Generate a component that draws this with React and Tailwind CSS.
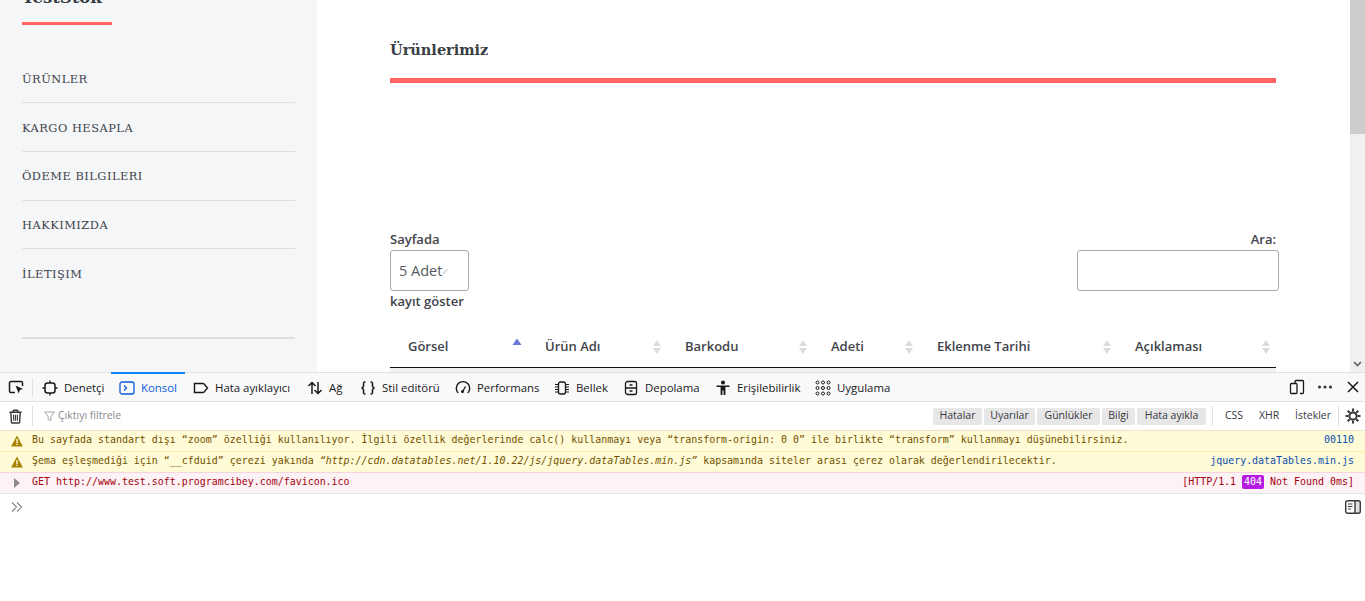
const slab = 'font-["DejaVu_Serif",serif]'

const navItems = ['ÜRÜNLER', 'KARGO HESAPLA', 'ÖDEME BILGILERI', 'HAKKIMIZDA', 'İLETIŞIM']

const columns = [
  { label: 'Görsel', width: 'w-[137px]', active: true },
  { label: 'Ürün Adı', width: 'w-[140px]' },
  { label: 'Barkodu', width: 'w-[146px]' },
  { label: 'Adeti', width: 'w-[106px]' },
  { label: 'Eklenme Tarihi', width: 'w-[198px]' },
  { label: 'Açıklaması', width: 'w-[159px]' },
]

const Ico = ({ children, className = 'h-4 w-4' }) => (
  <svg viewBox="0 0 16 16" fill="none" stroke="currentColor" strokeWidth="1.3" className={`${className} shrink-0`}>
    {children}
  </svg>
)

const tabs = [
  {
    label: 'Denetçi', width: 'w-[78px]', pad: 'pl-[9px]', icon: (
      <Ico><rect x="3" y="3" width="10" height="10" rx="2.5" strokeWidth="1.5" /><path d="M8 0.5V3M8 13v2.5M0.5 8H3M13 8h2.5" /></Ico>
    ),
  },
  {
    label: 'Konsol', width: 'w-[74px]', active: true, icon: (
      <Ico><rect x="1" y="2" width="14" height="12" rx="2" /><path d="M5 5.5 7.5 8 5 10.5" /></Ico>
    ),
  },
  {
    label: 'Hata ayıklayıcı', width: 'w-[114px]', icon: (
      <Ico><path d="M1.5 3.5h8.5a1.5 1.5 0 0 1 1.1.5l3.4 4-3.4 4a1.5 1.5 0 0 1-1.1.5H1.5z" strokeWidth="1.4" /></Ico>
    ),
  },
  {
    label: 'Ağ', width: 'w-[53px]', icon: (
      <Ico><path d="M5 14V2.5M1.5 6 5 2.5 8.5 6M11 2v11.5M7.5 10l3.5 3.5 3.5-3.5" strokeWidth="1.5" /></Ico>
    ),
  },
  {
    label: 'Stil editörü', width: 'w-[95px]', icon: (
      <Ico><path d="M5.5 2H5a1.5 1.5 0 0 0-1.5 1.5v3L2 8l1.5 1.5v3A1.5 1.5 0 0 0 5 14h.5M10.5 2h.5a1.5 1.5 0 0 1 1.5 1.5v3L14 8l-1.5 1.5v3A1.5 1.5 0 0 1 11 14h-.5" strokeWidth="1.5" /></Ico>
    ),
  },
  {
    label: 'Performans', width: 'w-[99px]', icon: (
      <Ico><path d="M3.2 13A6.7 6.7 0 1 1 12.8 13" strokeWidth="1.4" /><circle cx="7.5" cy="11.5" r="1.5" fill="currentColor" stroke="none" /><path d="M8 11 10.5 6.5" /></Ico>
    ),
  },
  {
    label: 'Bellek', width: 'w-[69px]', icon: (
      <Ico><rect x="4.5" y="2" width="7" height="12" rx="2" /><path d="M1 4.5h3M1 7h3M1 9.5h3M1 12h3M12 4.5h3M12 7h3M12 9.5h3M12 12h3" strokeWidth="1" /></Ico>
    ),
  },
  {
    label: 'Depolama', width: 'w-[92px]', icon: (
      <Ico><rect x="2.5" y="1.5" width="11" height="13" rx="2" /><path d="M2.5 8h11M6.5 5h3M6.5 11h3" /></Ico>
    ),
  },
  {
    label: 'Erişilebilirlik', width: 'w-[100px]', icon: (
      <svg viewBox="0 0 16 16" fill="currentColor" className="h-4 w-4 shrink-0">
        <circle cx="8" cy="2.5" r="2" />
        <path d="M1.5 5.5h13v1.6H10.4V15H8.6v-4.5H7.4V15H5.6V7.1H1.5z" />
      </svg>
    ),
  },
  {
    label: 'Uygulama', width: 'w-[92px]', icon: (
      <Ico>
        {[2.5, 8, 13.5].flatMap((x) =>
          [2.5, 8, 13.5].map((y) => <circle key={`${x}-${y}`} cx={x} cy={y} r="1.5" strokeWidth="1" />)
        )}
      </Ico>
    ),
  },
]

const filters = [
  { label: 'Hatalar', width: 'w-[49px]' },
  { label: 'Uyarılar', width: 'w-[51px]' },
  { label: 'Günlükler', width: 'w-[63px]' },
  { label: 'Bilgi', width: 'w-[33px]' },
  { label: 'Hata ayıkla', width: 'w-[69px]' },
]

const Warn = () => (
  <svg viewBox="0 0 12 12" className="h-3 w-3 shrink-0">
    <path d="M6 .5 11.9 11.5H.1z" fill="#a58200" />
    <path d="M5.3 4h1.4v4H5.3zM5.3 8.8h1.4v1.3H5.3z" fill="#fffbd6" />
  </svg>
)

function SortArrows({ active }) {
  if (active) {
    return (
      <svg viewBox="0 0 10 16" className="mb-[7px] h-4 w-[10px] shrink-0">
        <path d="M5 3.5 9.5 10H.5z" fill="#7077dc" />
      </svg>
    )
  }
  return (
    <svg viewBox="0 0 10 16" className="h-4 w-[10px] shrink-0">
      <path d="M5 1 9 7H1z" fill="#dcdcdc" />
      <path d="M5 15 9 9H1z" fill="#dcdcdc" />
    </svg>
  )
}

function Sidebar() {
  return (
    <aside className="flex w-[317px] shrink-0 flex-col overflow-hidden bg-[#f5f6f8] pl-[22px] pr-[22px]">
      <h1 className={`${slab} -mt-[14px] text-[16.5px] font-bold leading-[24px] text-[#343a40]`}>TestStok</h1>
      <div className="mt-[12px] h-[3px] w-[90px] shrink-0 bg-[#ff6464]" />
      <nav className="mt-[29.5px]">
        {navItems.map((item, i) => (
          <div
            key={item}
            className={`${slab} flex h-[48.7px] items-start pt-[15.5px] text-[11.4px] leading-[18px] tracking-[0.5px] text-[#3d4249] ${i < 4 ? 'border-b border-[#dfe0e2]' : ''}`}
          >
            {item}
          </div>
        ))}
      </nav>
      <div className="mt-[39px] h-[2px] shrink-0 bg-[#dddee0]" />
    </aside>
  )
}

function Main() {
  return (
    <main className="min-w-0 flex-1 overflow-hidden pl-[73px] pr-[74px] font-['Open_Sans',sans-serif] text-[#3f444a]">
      <h2 className={`${slab} mt-[39px] text-[14.5px] font-bold leading-[22px] text-[#3a3f45]`}>Ürünlerimiz</h2>
      <div className="mt-[17px] h-[5px] bg-[#ff6464]" />

      <div className="mt-[147px] flex items-start justify-between">
        <div className="text-[13px] font-semibold leading-[18px]">
          <div>Sayfada</div>
          <div className="mt-[2px] flex h-[41px] w-[79px] items-center rounded-[3px] border border-[#a9a9a9] pl-[8px] text-[14.5px] font-normal text-[#555a60]">
            5 Adet
            <svg viewBox="0 0 8 8" className="-ml-[1px] h-2 w-2">
              <path d="M1 6.5 6.5 1.5 7.5 2.5 3 7z" fill="#d6d6d6" />
            </svg>
          </div>
          <div className="mt-[1px]">kayıt göster</div>
        </div>
        <div className="-mr-[3px] text-right text-[13px] font-semibold leading-[18px]">
          <div className="pr-[3px]">Ara:</div>
          <div className="mt-[2px] h-[41px] w-[202px] rounded-[3px] border border-[#a9a9a9]" />
        </div>
      </div>

      <div className="mt-[18px] flex h-[40px] border-b border-[#111] pb-[2px] text-[13px] font-semibold">
        {columns.map((col) => (
          <div key={col.label} className={`${col.width} flex items-center justify-between pl-[18px] pr-[5px]`}>
            <span>{col.label}</span>
            <SortArrows active={col.active} />
          </div>
        ))}
      </div>
      <div className="h-[4px] bg-[#f0f0f0]" />
    </main>
  )
}

function Scrollbar() {
  return (
    <div className="flex w-[15px] shrink-0 flex-col justify-between bg-[#f0f0f0]">
      <div className="h-[134px] bg-[#cdcdcd]" />
      <svg viewBox="0 0 15 15" className="mb-[1px] h-[15px] w-[15px] text-[#606060]">
        <path d="M4 6 7.5 9.5 11 6" fill="none" stroke="currentColor" strokeWidth="1.6" />
      </svg>
    </div>
  )
}

function Toolbar() {
  return (
    <div className="flex h-[30px] shrink-0 items-stretch border-y border-[#e0e0e2] bg-[#f9f9fa] text-[12px] text-[#18181a]">
      <div className="flex w-[32px] items-center pl-[8px]">
        <Ico>
          <path d="M7 13.5H3A1.5 1.5 0 0 1 1.5 12V4A1.5 1.5 0 0 1 3 2.5h10A1.5 1.5 0 0 1 14.5 4v3" strokeWidth="1.5" />
          <path d="M7.5 6.5 15 10l-3.2 1-1 3.5z" fill="currentColor" stroke="none" />
        </Ico>
      </div>
      <div className="my-[5px] w-px bg-[#e0e0e2]" />
      {tabs.map((tab) => (
        <div
          key={tab.label}
          className={`${tab.width} ${tab.pad || 'pl-[8px]'} -mt-px flex items-center gap-[6px] whitespace-nowrap border-t-2 ${tab.active ? 'border-[#0a84ff] text-[#0a5bd8]' : 'border-transparent'}`}
        >
          {tab.icon}
          <span className="font-['Open_Sans',sans-serif] text-[11.4px]">{tab.label}</span>
        </div>
      ))}
      <div className="ml-auto flex items-center gap-[12px] pr-[4px]">
        <Ico>
          <path d="M6 4.5V2.5A1 1 0 0 1 7 1.5h6.5a1 1 0 0 1 1 1v11a1 1 0 0 1-1 1H11" />
          <rect x="1.5" y="4.5" width="6.5" height="10" rx="1" />
        </Ico>
        <svg viewBox="0 0 16 16" fill="currentColor" className="h-4 w-4 text-[#38383d]">
          <circle cx="2.5" cy="8" r="1.6" />
          <circle cx="8" cy="8" r="1.6" />
          <circle cx="13.5" cy="8" r="1.6" />
        </svg>
        <Ico><path d="M3 3 13 13M13 3 3 13" strokeWidth="1.5" /></Ico>
      </div>
    </div>
  )
}

function FilterBar() {
  return (
    <div className="flex h-[29px] shrink-0 items-center border-b border-[#e8e4cf] bg-white font-['Open_Sans',sans-serif] text-[11px] text-[#38383d]">
      <div className="flex w-[32px] justify-center pr-[2px]">
        <Ico className="h-[15px] w-[15px]">
          <path d="M1.5 3.5h13M5.5 3.5V2a.7.7 0 0 1 .7-.7h3.6a.7.7 0 0 1 .7.7v1.5M3 3.5l.6 10.3a1.2 1.2 0 0 0 1.2 1.2h6.4a1.2 1.2 0 0 0 1.2-1.2L13 3.5" strokeWidth="1.5" />
          <path d="M6 6v6.5M8 6v6.5M10 6v6.5" strokeWidth="1.2" />
        </Ico>
      </div>
      <div className="h-[20px] w-px bg-[#e0e0e2]" />
      <Ico className="ml-[11px] h-[11px] w-[11px] text-[#9a9a9f]">
        <path d="M1 1.5h14L10 8v6l-4-2V8z" />
      </Ico>
      <span className="ml-[3px] text-[10.5px] text-[#8a8a8f]">Çıktıyı filtrele</span>
      <div className="ml-auto flex items-center">
        <div className="ml-[2px] flex items-center gap-[2px]">
          {filters.map((f) => (
            <span key={f.label} className={`${f.width} flex h-[17px] items-center justify-center rounded-[2px] bg-[#e7e7e8] whitespace-nowrap text-[10.5px]`}>
              {f.label}
            </span>
          ))}
        </div>
        <div className="ml-[6px] h-[20px] w-px bg-[#e0e0e2]" />
        <div className="flex w-[125px] items-center justify-between pl-[12px] pr-[7px] text-[10.5px]">
          <span>CSS</span>
          <span>XHR</span>
          <span>İstekler</span>
        </div>
        <div className="h-[20px] w-px bg-[#e0e0e2]" />
        <svg viewBox="0 0 16 16" className="ml-[6px] mr-[4px] h-4 w-4 text-[#38383d]">
          <circle cx="8" cy="8" r="3.6" fill="none" stroke="currentColor" strokeWidth="2" />
          <path d="M8 .5v3M8 12.5v3M.5 8h3M12.5 8h3M2.7 2.7l2.1 2.1M11.2 11.2l2.1 2.1M13.3 2.7l-2.1 2.1M4.8 11.2l-2.1 2.1" stroke="currentColor" strokeWidth="2" />
        </svg>
      </div>
    </div>
  )
}

function Console() {
  return (
    <div className="font-['DejaVu_Sans_Mono',monospace] text-[9.96px]">
      <div className="flex h-[21px] items-center border-b border-[#f6eeaa] bg-[#fffbd6] pl-[11px] pr-[11px] text-[#715100]">
        <Warn />
        <span className="ml-[9px] whitespace-nowrap pb-[2px]">Bu sayfada standart dışı “zoom” özelliği kullanılıyor. İlgili özellik değerlerinde calc() kullanmayı veya “transform-origin: 0 0” ile birlikte “transform” kullanmayı düşünebilirsiniz.</span>
        <span className="ml-auto pb-[2px] text-[#0a4eb0]">00110</span>
      </div>
      <div className="flex h-[21px] items-center border-b border-[#f8d5dd] bg-[#fffbd6] pl-[11px] pr-[11px] text-[#715100]">
        <Warn />
        <span className="ml-[9px] whitespace-nowrap pb-[2px]">
          Şema eşleşmediği için “__cfduid” çerezi yakında <i>“http://cdn.datatables.net/1.10.22/js/jquery.dataTables.min.js”</i> kapsamında siteler arası çerez olarak değerlendirilecektir.
        </span>
        <span className="ml-auto pb-[2px] text-[#0a4eb0]">jquery.dataTables.min.js</span>
      </div>
      <div className="flex h-[21px] items-center border-b border-[#e4e4e6] bg-[#fdf2f5] pl-[14px] pr-[11px] text-[#a4000f]">
        <svg viewBox="0 0 6 10" className="h-[10px] w-[6px] shrink-0">
          <path d="M0 0 6 5 0 10z" fill="#8a8a8f" />
        </svg>
        <span className="ml-[12px] pb-[2px]">GET http://www.test.soft.programcibey.com/favicon.ico</span>
        <span className="ml-auto flex items-center gap-[6px] whitespace-nowrap pb-[2px]">
          [HTTP/1.1
          <span className="rounded-[2px] bg-[#b51be3] px-[2px] text-white">404</span>
          Not Found 0ms]
        </span>
      </div>
      <div className="flex h-[26px] items-center justify-between pl-[11px] pr-[4px]">
        <svg viewBox="0 0 12 10" className="h-[10px] w-[12px] text-[#8a8a8f]">
          <path d="M1 .5 5.5 5 1 9.5M6 .5 10.5 5 6 9.5" fill="none" stroke="currentColor" strokeWidth="1.2" />
        </svg>
        <svg viewBox="0 0 16 14" className="h-[14px] w-[16px] text-[#38383d]">
          <rect x=".7" y=".7" width="14.6" height="12.6" rx="2" fill="none" stroke="currentColor" strokeWidth="1.4" />
          <path d="M10 1v12" stroke="currentColor" strokeWidth="1.4" />
          <path d="M3 4h4.5M3 6.5h4.5M3 9h3" stroke="currentColor" strokeWidth="1" />
          <rect x="10" y="1" width="5" height="12" fill="currentColor" opacity=".15" />
        </svg>
      </div>
    </div>
  )
}

export default function App() {
  return (
    <div className="flex h-[601px] w-[1365px] flex-col overflow-hidden bg-white">
      <div className="flex h-[372px] shrink-0 overflow-hidden">
        <Sidebar />
        <Main />
        <Scrollbar />
      </div>
      <Toolbar />
      <FilterBar />
      <Console />
    </div>
  )
}
